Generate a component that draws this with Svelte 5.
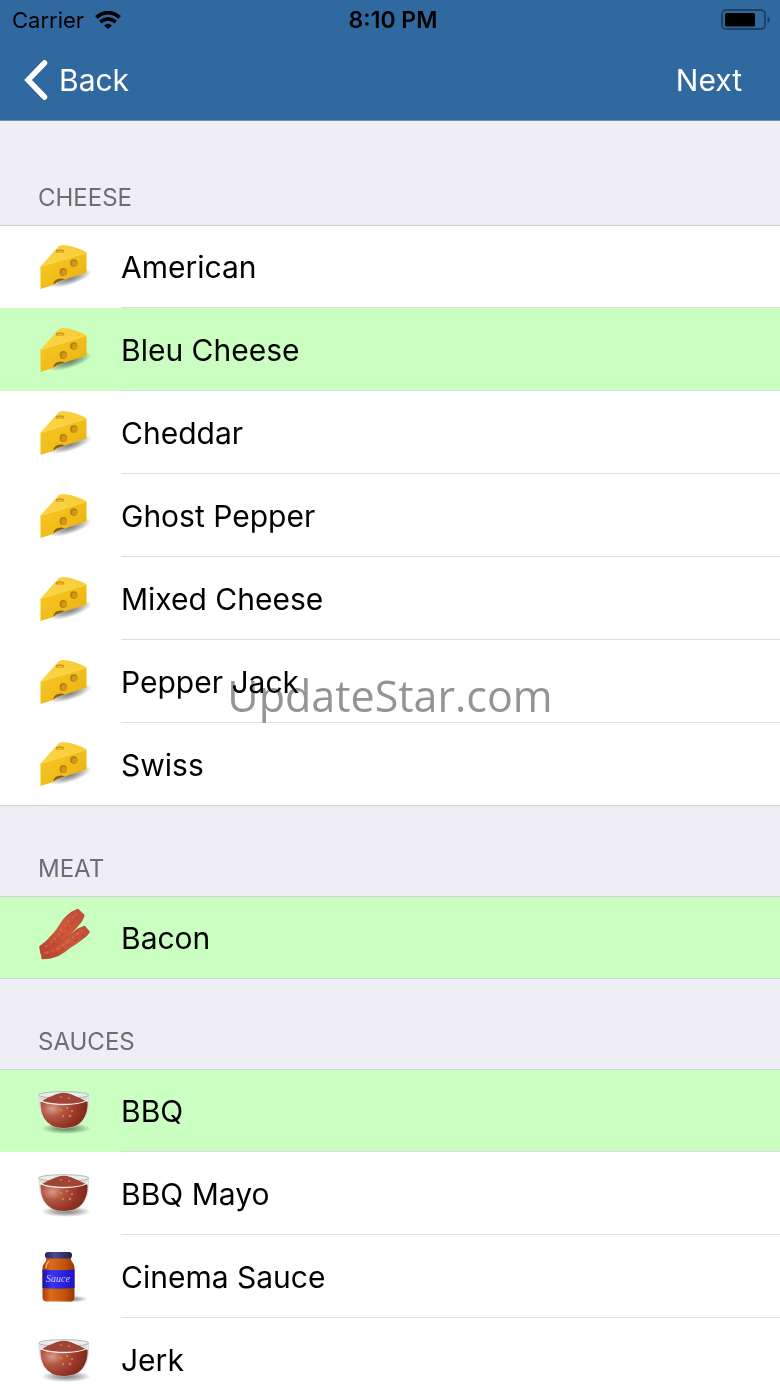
<script lang="ts">
  type Icon = 'cheese' | 'bacon' | 'bowl' | 'jar';

  interface Topping {
    name: string;
    icon: Icon;
    selected: boolean;
  }

  interface Section {
    title: string;
    items: Topping[];
  }

  function item(name: string, icon: Icon, selected = false): Topping {
    return { name, icon, selected };
  }

  let sections: Section[] = $state([
    {
      title: 'Cheese',
      items: [
        item('American', 'cheese'),
        item('Bleu Cheese', 'cheese', true),
        item('Cheddar', 'cheese'),
        item('Ghost Pepper', 'cheese'),
        item('Mixed Cheese', 'cheese'),
        item('Pepper Jack', 'cheese'),
        item('Swiss', 'cheese')
      ]
    },
    {
      title: 'Meat',
      items: [item('Bacon', 'bacon', true)]
    },
    {
      title: 'Sauces',
      items: [
        item('BBQ', 'bowl', true),
        item('BBQ Mayo', 'bowl'),
        item('Cinema Sauce', 'jar'),
        item('Jerk', 'bowl')
      ]
    }
  ]);
</script>

<!-- shared gradients for the food icons -->
<svg class="defs" width="0" height="0" aria-hidden="true">
  <defs>
    <linearGradient id="cheese-front" x1="0" y1="0" x2="1" y2="1">
      <stop offset="0" stop-color="#f8c824" />
      <stop offset="0.6" stop-color="#f0bb18" />
      <stop offset="1" stop-color="#e6ab12" />
    </linearGradient>
    <linearGradient id="cheese-top" x1="0" y1="1" x2="1" y2="0">
      <stop offset="0" stop-color="#fbd648" />
      <stop offset="1" stop-color="#f8cc34" />
    </linearGradient>
    <linearGradient id="bacon-fill" x1="0" y1="1" x2="1" y2="0">
      <stop offset="0" stop-color="#b5422c" />
      <stop offset="0.5" stop-color="#cf583b" />
      <stop offset="1" stop-color="#c04c34" />
    </linearGradient>
    <radialGradient id="sauce-fill" cx="0.25" cy="0.45" r="0.75">
      <stop offset="0" stop-color="#dc9a8a" />
      <stop offset="0.3" stop-color="#b45846" />
      <stop offset="0.7" stop-color="#953626" />
      <stop offset="1" stop-color="#7c2a20" />
    </radialGradient>
    <linearGradient id="jar-fill">
      <stop offset="0" stop-color="#a83c08" />
      <stop offset="0.25" stop-color="#dc6c1c" />
      <stop offset="0.7" stop-color="#c45208" />
      <stop offset="1" stop-color="#963804" />
    </linearGradient>
    <linearGradient id="label-fill">
      <stop offset="0" stop-color="#1c14a8" />
      <stop offset="0.3" stop-color="#3c34f0" />
      <stop offset="1" stop-color="#1c12c8" />
    </linearGradient>
    <linearGradient id="lid-fill">
      <stop offset="0" stop-color="#24245a" />
      <stop offset="0.35" stop-color="#4c4c90" />
      <stop offset="1" stop-color="#20204e" />
    </linearGradient>
    <radialGradient id="shadow-fill">
      <stop offset="0" stop-color="#000" stop-opacity="0.5" />
      <stop offset="0.5" stop-color="#000" stop-opacity="0.3" />
      <stop offset="1" stop-color="#000" stop-opacity="0" />
    </radialGradient>
  </defs>
</svg>

{#snippet foodIcon(icon: Icon)}
  <svg class="food" width="56" height="56" viewBox="0 0 56 56" aria-hidden="true">
    {#if icon === 'cheese'}
      <ellipse cx="34" cy="38.500" rx="23" ry="6.500" fill="url(#shadow-fill)" transform="rotate(-18 34 38.500)" />
      <path d="M4.500 26.500L22.500 6.500Q24 5 27 5Q40 6 50.500 12.500L48 16L5 28z" fill="url(#cheese-top)" />
      <path d="M4.500 26.500L50.500 12.500V32.500L28.500 39.500Q24.500 37.500 20.500 41L18.500 44.500L4.500 49z" fill="url(#cheese-front)" />
      <path d="M5 26.500L50.500 12.500" fill="none" stroke="#fddc60" stroke-width="0.8" />
      <ellipse cx="24" cy="11.200" rx="4.300" ry="1.900" fill="#cf9418" />
      <ellipse cx="24.400" cy="11.900" rx="3.200" ry="1.100" fill="#e6b436" />
      <ellipse cx="37.800" cy="23" rx="3.700" ry="3.700" fill="#b67c0e" />
      <ellipse cx="38.500" cy="23.500" rx="2.700" ry="2.800" fill="#d2971a" />
      <ellipse cx="27.300" cy="32" rx="3.700" ry="3.900" fill="#b67c0e" />
      <ellipse cx="28" cy="32.500" rx="2.700" ry="2.900" fill="#d2971a" />
      <path d="M17.500 44.500Q17.500 40 22 39Q26 38 28.500 39.500L24 41Q20 42 17.500 44.500z" fill="#8d620f" />
    {:else if icon === 'bacon'}
      <path d="M3.500 36.500Q10 32 16 25Q21 20 24.300 14Q27 9 31 5.500Q36 1 42 -1L48.300 5Q47 11 42.700 15Q39 20 34 24Q28 32 12 41L5 44z" fill="url(#bacon-fill)" stroke="#a6432f" stroke-width="0.600" />
      <path d="M4 38L6 49Q15 49 22.700 45.500Q29 42 34.300 37.500Q40 34 46 29.500Q51 26.500 53.700 22L48.700 16Q42 18 37.500 22Q32 26 26.500 31.500Q18 37 10 40z" fill="url(#bacon-fill)" stroke="#a6432f" stroke-width="0.600" />
      <g fill="none" stroke="#e2805c" stroke-width="1.800" opacity="0.450">
        <path d="M9 37Q17 32 23 23Q31 11 41 4" stroke-dasharray="3 4 2 2" />
        <path d="M9 43Q22 41 32 31Q40 25 47 20" stroke-dasharray="4 3 2 3" />
      </g>
      <g fill="none" stroke="#9a3625" stroke-width="1.500" opacity="0.350">
        <path d="M16 35Q27 25 33 17Q37 11 44 5" stroke-dasharray="3 4" />
        <path d="M10 46Q23 44 33 35Q42 29 49 23" stroke-dasharray="4 4" />
      </g>
    {:else if icon === 'bowl'}
      <ellipse cx="30" cy="44.500" rx="25" ry="5.500" fill="url(#shadow-fill)" />
      <path d="M2.500 11Q2.500 22 5 29Q7.500 36 14 40.500Q20 44.500 28 44.500Q37 44.500 43 40.500Q49 36 51.500 29Q53.500 22 53 11z" fill="#d3d8d6" opacity="0.85" />
      <ellipse cx="27.700" cy="11" rx="25" ry="3.300" fill="#e9eeec" stroke="#a9b5b0" stroke-width="0.900" />
      <path d="M4.500 18Q12 13 20 10.500Q28 7.500 35 10.500Q44 14 51.500 18Q52 26 48.500 33Q43 44 28 44Q14 44 8 34Q4.500 27 4.500 18z" fill="url(#sauce-fill)" />
      <path d="M7 17Q17 11 23 9.500Q28 8 34 10Q42 13 49 17Q28 23 7 17z" fill="#a04434" />
      <path d="M3.500 15Q6 20 27.500 20.500Q49 20 52 15" fill="none" stroke="#f8eeee" stroke-width="1.400" />
      <g fill="#d87f3a">
        <circle cx="25" cy="26" r="1.300" />
        <circle cx="31" cy="24" r="1.200" />
        <circle cx="36" cy="27" r="1.100" />
        <circle cx="27" cy="32" r="1.200" />
        <circle cx="34" cy="32" r="1.300" />
        <circle cx="33" cy="14" r="1" />
        <circle cx="25" cy="13" r="0.900" />
      </g>
    {:else}
      <ellipse cx="34" cy="49" rx="18" ry="3.500" fill="url(#shadow-fill)" />
      <path d="M10.500 7H34.500Q35 11 37 13Q38.500 15 38.500 19V47Q38.500 51.500 34 51.500H11Q6.500 51.500 6.500 47V19Q6.500 15 8.500 13Q10.500 11 10.500 7z" fill="url(#jar-fill)" />
      <path d="M13 11Q10 14 10 18" fill="none" stroke="#f4a565" stroke-width="1.500" />
      <rect x="9" y="2" width="27" height="6.500" rx="3" fill="url(#lid-fill)" />
      <path d="M6.500 19.500Q22 21 38.500 19.500V38Q22 39.500 6.500 38z" fill="url(#label-fill)" />
      <text class="jar-label" x="22" y="32" text-anchor="middle">Sauce</text>
    {/if}
  </svg>
{/snippet}

<div class="screen">
  <header>
    <div class="status-bar">
      <div class="carrier">
        <span>Carrier</span>
        <svg width="26" height="18" viewBox="0 0 26 18" fill="none" stroke="#000" stroke-width="3.800" role="img" aria-label="Wi-Fi">
          <path d="M1.300 6.400Q13 -3.200 24.700 6.400" />
          <path d="M5.300 11Q13 4.800 20.700 11" />
          <path d="M9 14.600Q13 11 17 14.600L13 18z" fill="#000" stroke="none" />
        </svg>
      </div>
      <span class="time">8:10 PM</span>
      <svg class="battery" width="49" height="22" viewBox="0 0 49 22" role="img" aria-label="Battery">
        <rect x="1" y="1" width="43" height="19" rx="4" fill="none" stroke="#1b4060" stroke-width="1.800" />
        <rect x="4" y="4" width="30" height="13.500" rx="1.500" fill="#000" />
        <path d="M46.500 7.500Q49 8.500 49 10.700Q49 13 46.500 14z" fill="#1b4060" />
      </svg>
    </div>
    <nav>
      <button type="button" class="nav-button">
        <svg width="24" height="40" viewBox="0 0 24 40" fill="none" stroke="#fff" stroke-width="5.500" stroke-linecap="round" aria-hidden="true">
          <path d="M20.500 3L4 20L20.500 37" />
        </svg>
        Back
      </button>
      <button type="button" class="nav-button">Next</button>
    </nav>
  </header>

  <main>
    {#each sections as section (section.title)}
      <section>
        <h2>{section.title}</h2>
        <ul>
          {#each section.items as topping (topping.name)}
            <li>
              <button
                type="button"
                class="row"
                class:selected={topping.selected}
                aria-pressed={topping.selected}
                onclick={() => (topping.selected = !topping.selected)}
              >
                {@render foodIcon(topping.icon)}
                <span class="name">{topping.name}</span>
              </button>
            </li>
          {/each}
        </ul>
      </section>
    {/each}
  </main>

  <div class="watermark">UpdateStar.com</div>
</div>

<style>
  :global(body) {
    margin: 0;
    background: #efeef4;
  }

  .defs {
    position: absolute;
  }

  .screen {
    position: relative;
    display: flex;
    flex-direction: column;
    height: 100vh;
    overflow: hidden;
    background: #efeef4;
    color: #000;
    font-family: Inter, 'Liberation Sans', sans-serif;
  }

  header {
    flex-shrink: 0;
    background: #30699f;
    border-bottom: 1px solid #6f93b4;
  }

  .status-bar {
    display: grid;
    grid-template-columns: 1fr auto 1fr;
    align-items: center;
    height: 40px;
    padding: 0 10px 0 12px;
    font-size: 22px;
  }

  .carrier {
    display: flex;
    align-items: center;
    gap: 11px;
  }

  .time {
    padding-left: 4px;
    font-size: 23px;
    font-weight: 600;
  }

  .battery {
    justify-self: end;
  }

  nav {
    display: flex;
    align-items: center;
    justify-content: space-between;
    height: 80px;
    padding: 0 38px 0 24px;
  }

  .nav-button {
    display: flex;
    align-items: center;
    gap: 11px;
    padding: 0;
    border: 0;
    background: none;
    color: #fff;
    font: inherit;
    font-size: 30px;
    cursor: pointer;
  }

  main {
    flex: 1;
    min-height: 0;
    padding-top: 14px;
    overflow-y: auto;
    scrollbar-width: none;
  }

  h2 {
    margin: 0;
    padding: 48px 38px 12px;
    color: #6d6d72;
    font-size: 24px;
    font-weight: 400;
    line-height: 30px;
    text-transform: uppercase;
  }

  ul {
    margin: 0;
    padding: 0;
    list-style: none;
  }

  .row {
    display: flex;
    align-items: stretch;
    width: 100%;
    height: 83px;
    padding: 2px 0 0 36px;
    border: 0;
    background: #fff;
    color: inherit;
    font: inherit;
    font-size: 30px;
    text-align: left;
    cursor: pointer;
  }

  .row.selected {
    background: #cbffc2;
  }

  li:first-child .row {
    padding-top: 1px;
    border-top: 1px solid #d2d1d7;
  }

  li:last-child .row {
    border-bottom: 1px solid #d2d1d7;
  }

  .food {
    flex-shrink: 0;
    align-self: center;
    margin-right: 29px;
    overflow: visible;
  }

  .name {
    display: flex;
    flex: 1;
    align-items: center;
    border-bottom: 1px solid #dddce0;
  }

  li:last-child .name {
    border-bottom: 0;
  }

  .jar-label {
    fill: #c9c8ff;
    font-family: 'Liberation Serif', serif;
    font-size: 10px;
    font-style: italic;
  }

  /* darken keeps the row text in front of the mark */
  .watermark {
    position: absolute;
    inset: 0;
    display: grid;
    place-items: center;
    padding-top: 4px;
    color: #949494;
    font-family: 'Open Sans', 'Noto Sans', sans-serif;
    font-size: 43px;
    mix-blend-mode: darken;
    pointer-events: none;
  }
</style>
